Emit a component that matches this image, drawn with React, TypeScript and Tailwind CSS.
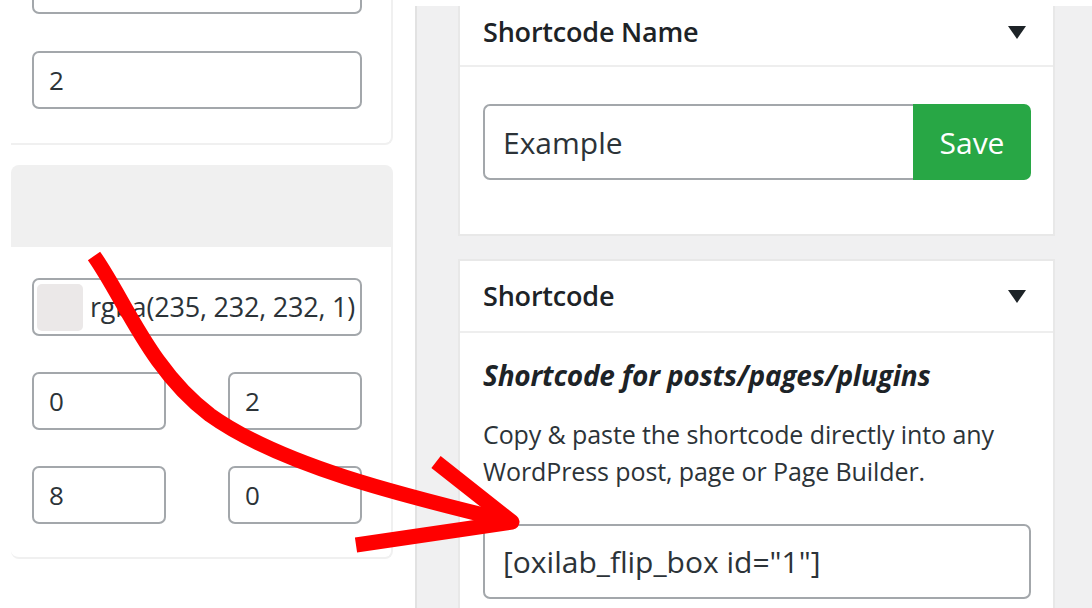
import React from "react";

const field =
  "border-2 border-[#a3a7ab] rounded-[7px] bg-white flex items-center text-[#2c3338]";

function Caret() {
  return (
    <svg width="18" height="13" viewBox="0 0 18 13" className="shrink-0">
      <polygon points="0,0 18,0 9,13" fill="#1d2327" />
    </svg>
  );
}

function NumberBox({ value }: { value: string }) {
  return (
    <div className={`${field} h-[58px] pl-[15px] text-[26px]`}>{value}</div>
  );
}

export default function App() {
  return (
    <div className="relative w-[1092px] h-[608px] overflow-hidden bg-white flex font-['Open_Sans','Noto_Sans',sans-serif]">
      {/* settings column */}
      <div className="w-[415px] shrink-0 flex flex-col pl-[11px] pr-[22px]">
        <div className="mt-[-80px] border-r-2 border-b-2 border-[#f0f0f0] rounded-br-[8px] pl-[21px] pr-[29px] pt-[36px] pb-[34px] flex flex-col gap-[37px]">
          <NumberBox value="" />
          <NumberBox value="2" />
        </div>

        <div className="mt-[20px] flex flex-col">
          <div className="h-[82px] bg-[#f0f0f0] rounded-t-[8px]" />
          <div className="border-r-2 border-b-2 border-[#f0f0f0] rounded-b-[8px] pl-[21px] pr-[29px] pt-[31px] pb-[33px] flex flex-col gap-[36px]">
            <div className={`${field} h-[58px] pl-[3px] text-[27px] tracking-[-0.2px]`}>
              <div className="w-[46px] h-[47px] rounded-[5px] bg-[rgb(235,232,232)] shrink-0" />
              <span className="ml-[7px] whitespace-nowrap">rgba(235, 232, 232, 1)</span>
            </div>
            <div className="grid grid-cols-2 gap-x-[62px]">
              <NumberBox value="0" />
              <NumberBox value="2" />
            </div>
            <div className="grid grid-cols-2 gap-x-[62px]">
              <NumberBox value="8" />
              <NumberBox value="0" />
            </div>
          </div>
        </div>
      </div>

      {/* sidebar */}
      <div className="flex-1 flex flex-col">
        <div className="h-[6px] bg-white" />
        <div className="flex-1 bg-[#f0f0f1] border-l-2 border-[#e2e2e2] pl-[41px] pr-[37px] flex flex-col gap-[23px]">
          <div className="bg-white border-2 border-t-0 border-[#e8e8e8]">
            <div className="h-[61px] pb-[7px] pl-[23px] pr-[27px] flex items-center justify-between border-b-2 border-[#eeeeee]">
              <span className="text-[27px] font-semibold text-[#1d2327] tracking-[-0.2px]">Shortcode Name</span>
              <Caret />
            </div>
            <div className="pt-[37px] pb-[54px] pl-[23px] pr-[22px]">
              <div className="flex h-[76px]">
                <div className="flex-1 border-2 border-r-0 border-[#a3a7ab] rounded-l-[7px] flex items-center pl-[18px] text-[30px] text-[#2c3338]">
                  Example
                </div>
                <div className="w-[118px] bg-[#28a745] rounded-r-[7px] flex items-center justify-center text-white text-[30px]">
                  Save
                </div>
              </div>
            </div>
          </div>

          <div className="bg-white border-2 border-b-0 border-[#e8e8e8] flex-1">
            <div className="h-[72px] pl-[23px] pr-[27px] flex items-center justify-between border-b-2 border-[#eeeeee]">
              <span className="text-[27px] font-semibold text-[#1d2327] tracking-[-0.2px]">Shortcode</span>
              <Caret />
            </div>
            <div className="pt-[24px] pl-[23px] pr-[22px]">
              <p className="text-[28px] leading-[36px] font-bold italic text-[#1d2327] whitespace-nowrap tracking-[-0.2px]">
                Shortcode for posts/pages/plugins
              </p>
              <p className="mt-[23px] text-[25px] leading-[37px] text-[#2c3338] whitespace-nowrap tracking-[-0.1px]">
                Copy &amp; paste the shortcode directly into any
                <br />
                WordPress post, page or Page Builder.
              </p>
              <div className={`${field} mt-[34px] h-[75px] pl-[18px] text-[30px]`}>
                [oxilab_flip_box id="1"]
              </div>
            </div>
          </div>
        </div>
      </div>

      {/* hand-drawn pointer */}
      <svg
        className="absolute inset-0 pointer-events-none"
        width="1092"
        height="608"
        viewBox="0 0 1092 608"
      >
        <g fill="none" stroke="#ff0000" strokeWidth="15" strokeLinejoin="round">
          <path d="M 94 256 C 125 300, 150 370, 210 415 C 280 465, 400 495, 512 522" strokeLinecap="butt" />
          <path d="M 436 462 L 512 522 L 356 545" strokeLinecap="butt" />
        </g>
      </svg>
    </div>
  );
}
